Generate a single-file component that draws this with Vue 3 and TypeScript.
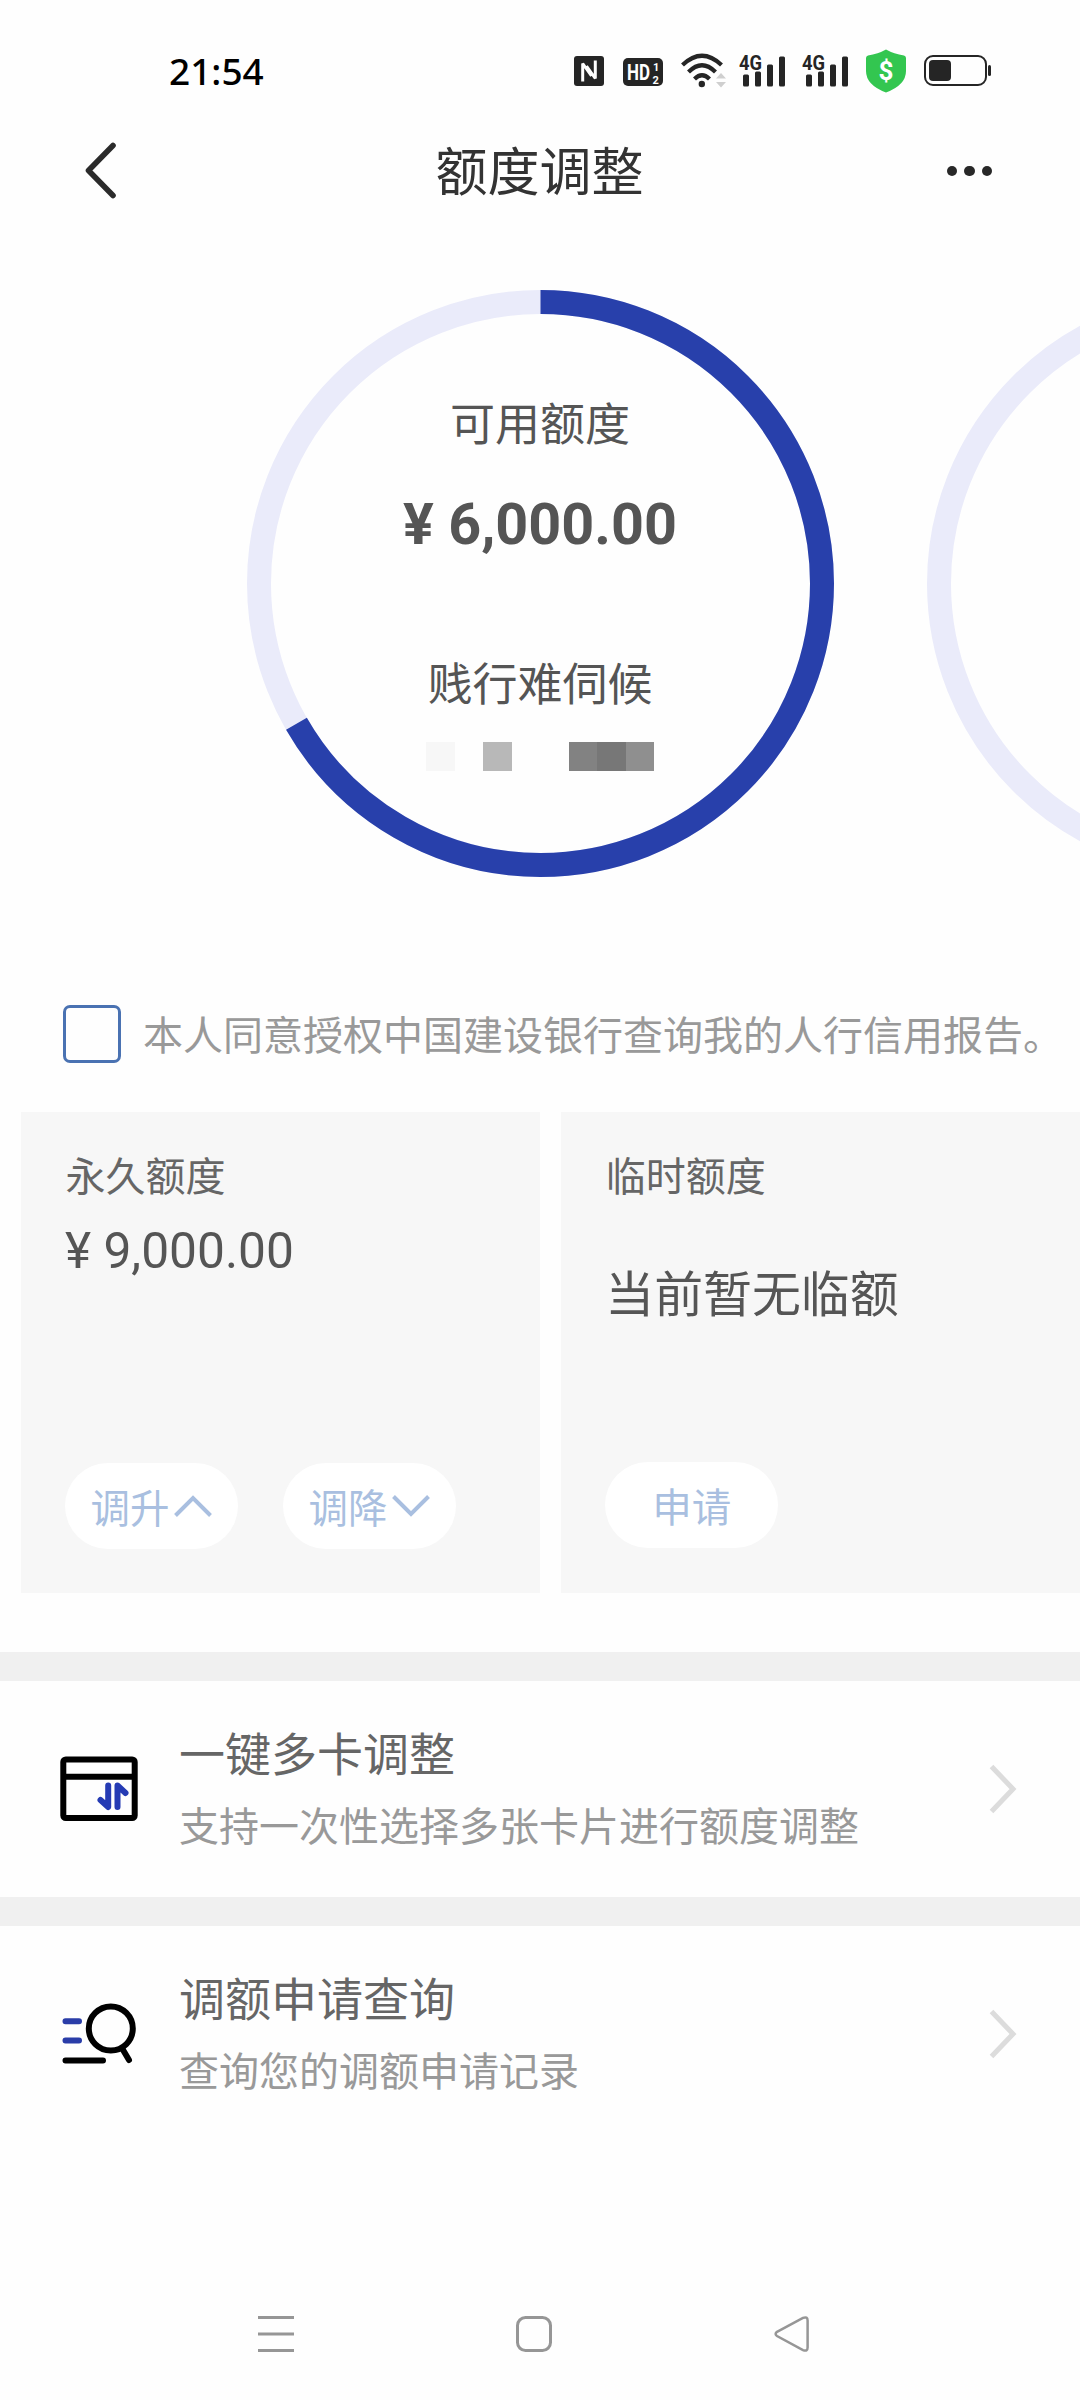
<script setup lang="ts">
interface Entry {
  id: string
  title: string
  desc: string
}

const entries: Entry[] = [
  { id: 'multi', title: '一键多卡调整', desc: '支持一次性选择多张卡片进行额度调整' },
  { id: 'query', title: '调额申请查询', desc: '查询您的调额申请记录' },
]

const maskBlocks: string[] = ['#f7f7f7', 'transparent', '#b8b8b8', 'transparent', 'transparent', '#828282', '#777', '#8f8f8f']

const radius = 281.5
const circumference = 2 * Math.PI * radius
const usedRatio = 6000 / 9000
const dash = `${circumference * usedRatio} ${circumference}`
</script>

<template>
  <div class="page">
    <div class="status">
      <span class="clock">21:54</span>
      <div class="tray">
        <svg class="nfc" width="30" height="30" viewBox="0 0 30 30">
          <rect width="30" height="30" rx="3" fill="#252525" />
          <path d="M8.700 25.500V7.500L17.500 20M21.300 4.500V22.500L12.500 10" fill="none" stroke="#fff" stroke-width="3" stroke-linejoin="bevel" />
        </svg>
        <svg class="hd" width="40" height="28" viewBox="0 0 40 28">
          <rect width="40" height="28" rx="5" fill="#252525" />
          <g fill="#fff" font-weight="700">
            <text x="4" y="22" font-size="22" textLength="23" lengthAdjust="spacingAndGlyphs">HD</text>
            <text x="30" y="12.500" font-size="11">1</text>
            <text x="29.500" y="25.500" font-size="11">2</text>
          </g>
        </svg>
        <svg class="wifi" width="45" height="36" viewBox="0 0 45 36">
          <g fill="none" stroke="#252525" stroke-width="4.200">
            <path d="M1.500 12Q21 -6.500 40.500 12" />
            <path d="M7.500 19Q21 5.500 34.500 19" />
            <path d="M13.500 26Q21 18.500 28.500 26" />
          </g>
          <circle cx="20.800" cy="31" r="3.200" fill="#252525" />
          <path d="M35 25.500l5-5.500 5 5.500zM35 29l5 5.500 5-5.500z" fill="#cfcfcf" />
        </svg>
        <svg v-for="n in 2" :key="n" class="signal" width="47" height="50" viewBox="0 -8 47 50">
          <text x="0" y="15.500" font-size="20.500" font-weight="700" fill="#252525" textLength="23" lengthAdjust="spacingAndGlyphs">4G</text>
          <g fill="#252525">
            <rect x="4" y="20.500" width="6" height="12" rx="1.500" />
            <rect x="16" y="17.500" width="6" height="15" rx="1.500" />
            <rect x="28" y="10.500" width="6" height="22" rx="1.500" />
            <rect x="40" y="2.500" width="6" height="30" rx="1.500" />
          </g>
        </svg>
        <svg class="shield" width="40" height="44" viewBox="0 0 40 44">
          <path d="M20 0.500Q28 5 38 6.500Q40 7 40 9V22Q40 36 20 43.500Q0 36 0 22V9Q0 7 2 6.500Q12 5 20 0.500Z" fill="#33c650" />
          <text x="20" y="31" text-anchor="middle" font-size="26" font-weight="700" fill="#fff">$</text>
        </svg>
        <svg class="battery" width="67" height="32" viewBox="0 0 67 32">
          <rect x="1" y="1" width="61" height="29" rx="8" fill="none" stroke="#252525" stroke-width="2" />
          <rect x="5" y="5" width="22" height="21" rx="4" fill="#252525" />
          <rect x="64" y="10" width="3" height="11" rx="1.500" fill="#252525" />
        </svg>
      </div>
    </div>

    <header class="header">
      <svg class="back" width="32" height="58" viewBox="0 0 32 58">
        <path d="M29 3.500L4.500 28.500L29 53.500" fill="none" stroke="#2b2b2b" stroke-width="5.600" stroke-linecap="round" stroke-linejoin="round" />
      </svg>
      <h1>额度调整</h1>
      <div class="more"><i></i><i></i><i></i></div>
    </header>

    <section class="rings">
      <div class="ring">
        <svg width="587" height="587" viewBox="0 0 587 587">
          <circle cx="293.500" cy="293.500" :r="radius" fill="none" stroke="#eaebfa" stroke-width="24" />
          <circle cx="293.500" cy="293.500" :r="radius" fill="none" stroke="#2840ab" stroke-width="24" :stroke-dasharray="dash" transform="rotate(-90 293.500 293.500)" />
        </svg>
        <div class="ring-text">
          <p class="label">可用额度</p>
          <p class="amount">¥ 6,000.00</p>
          <p class="label card-name">贱行难伺候</p>
          <div class="mask"><b v-for="(c, i) in maskBlocks" :key="i" :style="{ background: c }"></b></div>
        </div>
      </div>
      <div class="ring">
        <svg width="587" height="587" viewBox="0 0 587 587">
          <circle cx="293.500" cy="293.500" :r="radius" fill="none" stroke="#eaebfa" stroke-width="24" />
        </svg>
      </div>
    </section>

    <label class="agree">
      <span class="box"></span>
      <span class="agree-text">本人同意授权中国建设银行查询我的人行信用报告。</span>
    </label>

    <section class="cards">
      <div class="card">
        <p class="name">永久额度</p>
        <p class="value">¥ 9,000.00</p>
        <div class="actions">
          <button>调升<svg width="38" height="22" viewBox="0 0 38 22"><path d="M1.500 20.500L19 3L36.500 20.500" /></svg></button>
          <button>调降<svg width="38" height="22" viewBox="0 0 38 22"><path d="M1.500 1.500L19 19L36.500 1.500" /></svg></button>
        </div>
      </div>
      <div class="card">
        <p class="name">临时额度</p>
        <p class="value none">当前暂无临额</p>
        <div class="actions raised"><button>申请</button></div>
      </div>
    </section>

    <section v-for="e in entries" :key="e.id" class="entry">
      <svg v-if="e.id === 'multi'" class="icon" width="80" height="70" viewBox="0 0 80 70">
        <g fill="none" stroke="#000" stroke-width="6">
          <rect x="4.300" y="5.500" width="71.400" height="58.500" rx="2.500" />
          <path d="M4 22.800H76" />
        </g>
        <path d="M41.500 46L49.200 53V31.500M58.500 53V31.500L66.500 39" fill="none" stroke="#253bb4" stroke-width="6" stroke-linecap="round" stroke-linejoin="round" />
      </svg>
      <svg v-else class="icon" width="80" height="70" viewBox="0 0 80 70">
        <g fill="none" stroke="#000" stroke-width="6" stroke-linecap="round">
          <circle cx="51.800" cy="29.500" r="22" />
          <path d="M63.500 50L70 61M6.500 61.500H44" />
        </g>
        <path d="M6.500 22.200H20M6.500 41.500H20" stroke="#2a3da8" stroke-width="6" stroke-linecap="round" />
      </svg>
      <div class="entry-text">
        <h2>{{ e.title }}</h2>
        <p>{{ e.desc }}</p>
      </div>
      <svg class="arrow" width="28" height="50" viewBox="0 0 28 50">
        <path d="M2.500 2.500L24 25L2.500 47.500" fill="none" stroke="#dcdcdc" stroke-width="5" />
      </svg>
    </section>

    <nav class="nav">
      <svg width="36" height="36" viewBox="0 0 36 36"><path d="M0 1.500H36M0 18H36M0 34.500H36" /></svg>
      <svg width="36" height="36" viewBox="0 0 36 36"><rect x="1.500" y="1.500" width="33" height="33" rx="8" /></svg>
      <svg width="36" height="36" viewBox="0 0 36 36"><path d="M3 15.800L29 1.900Q33.600 .2 33.600 4.500V31.500Q33.600 35.800 29 34.100L3 20Q.2 18 3 15.800Z" stroke-width="2.500" /></svg>
    </nav>
  </div>
</template>

<style>
body {
  background: #fff;
}
</style>

<style scoped>
.page {
  width: 1080px;
  height: 2400px;
  overflow: hidden;
  display: flex;
  flex-direction: column;
  background: #fefefe;
  color: #555;
  font-family: Roboto, "Noto Sans CJK SC", sans-serif;
}
p, h1, h2 {
  margin: 0;
  font-weight: 400;
}
.status {
  box-sizing: border-box;
  height: 112px;
  padding: 30px 89px 0 169px;
  display: flex;
  align-items: center;
  justify-content: space-between;
}
.clock {
  font: 500 37px/50px "Noto Sans", sans-serif;
  color: #000;
}
.tray {
  display: flex;
  align-items: center;
}
.hd { margin: 2px 0 0 19px; }
.wifi { margin-left: 18px; }
.signal { margin-left: 13px; }
.signal + .signal { margin-left: 16px; }
.shield { margin-left: 17px; }
.battery { margin-left: 18px; }
.header {
  height: 118px;
  padding: 0 88px 0 84px;
  display: flex;
  align-items: center;
  justify-content: space-between;
}
.header h1 {
  font-size: 52px;
  line-height: 60px;
  color: #333;
  margin-top: 6px;
  margin-left: 16px;
}
.more {
  display: flex;
  gap: 7px;
}
.more i {
  width: 10.400px;
  height: 10.400px;
  border-radius: 50%;
  background: #282828;
}
.rings {
  height: 587px;
  padding: 60px 0 0 246.500px;
  display: flex;
  gap: 93px;
}
.ring {
  flex: none;
  width: 587px;
  display: grid;
}
.ring > * {
  grid-area: 1 / 1;
}
.ring-text {
  display: flex;
  flex-direction: column;
  align-items: center;
  padding-top: 106px;
}
.label {
  font-size: 45px;
  line-height: 60px;
}
.amount {
  font-size: 57.500px;
  font-weight: 700;
  line-height: 60px;
  margin-top: 39px;
}
.card-name { margin-top: 101px; }
.mask {
  display: flex;
  margin-top: 26px;
}
.mask b {
  width: 28.500px;
  height: 29px;
}
.agree {
  margin-top: 128px;
  padding-left: 63px;
  height: 58px;
  display: flex;
  align-items: center;
  gap: 22px;
  font-size: 40px;
  line-height: 54px;
  color: #999;
  white-space: nowrap;
}
.agree-text { padding-top: 5px; }
.box {
  box-sizing: border-box;
  width: 58px;
  height: 58px;
  border: 3px solid #4a72b2;
  border-radius: 7px;
}
.cards {
  margin-top: 49px;
  margin-left: 20.500px;
  height: 480.500px;
  display: flex;
  gap: 21px;
}
.card {
  box-sizing: border-box;
  flex: 1;
  background: #f7f7f7;
  padding: 38px 0 43.500px 44.500px;
  display: flex;
  flex-direction: column;
}
.name {
  font-size: 40px;
  line-height: 56px;
  color: #666;
  margin-left: .5px;
}
.value {
  font-size: 49.700px;
  line-height: 60px;
  margin-top: 15px;
}
.none {
  font-size: 48.900px;
  margin-top: 60px;
}
.actions {
  margin-top: auto;
  display: flex;
  gap: 45px;
}
.raised { margin-bottom: 1px; }
button {
  width: 173px;
  height: 86px;
  padding: 0 0 2px;
  border: 0;
  border-radius: 43px;
  background: #fff;
  display: flex;
  align-items: center;
  justify-content: center;
  gap: 4px;
  font: inherit;
  font-size: 39.500px;
  color: #a9bfe0;
}
button svg {
  margin: 2px 1px 0 0;
  fill: none;
  stroke: #a9bfe0;
  stroke-width: 4;
}
.cards + .entry { margin-top: 59.500px; }
.entry {
  height: 216px;
  border-top: 29px solid #f0f0f0;
  padding: 0 63px 0 59px;
  display: flex;
  align-items: center;
}
.entry-text {
  margin-left: 40px;
  flex: 1;
}
.entry h2 {
  font-size: 46px;
  line-height: 64px;
  color: #666;
}
.entry p {
  font-size: 40px;
  line-height: 56px;
  margin-top: 13px;
  color: #999;
}
.nav {
  margin-top: auto;
  padding: 0 270px 48px 258px;
  display: flex;
  justify-content: space-between;
  fill: none;
  stroke: #969696;
  stroke-width: 3;
}
</style>
